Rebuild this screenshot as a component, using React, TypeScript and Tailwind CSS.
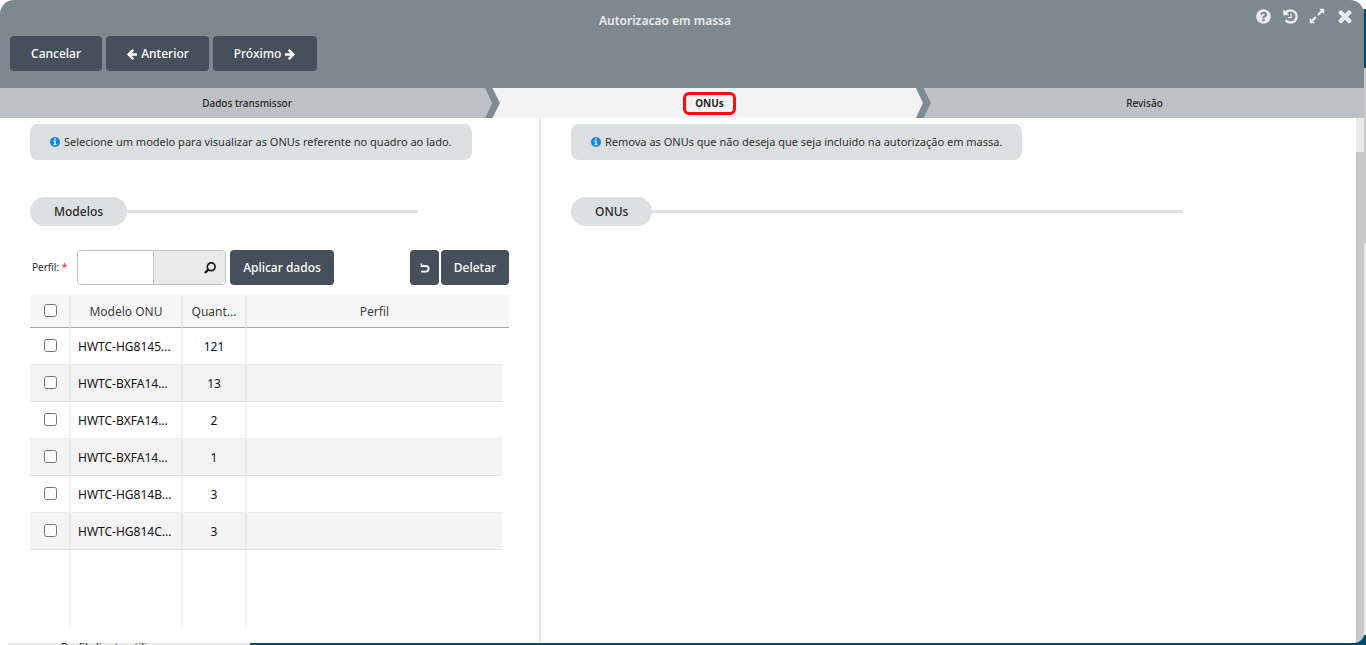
import type { ReactNode } from "react";

const paths = {
  arrowLeft:
    "M1664 896v128q0 53-32.5 90.5t-84.5 37.5h-704l293 294q38 36 38 90t-38 90l-75 76q-37 37-90 37-52 0-91-37l-651-652q-37-37-37-90 0-52 37-91l651-650q38-38 91-38 52 0 90 38l75 74q38 38 38 91t-38 91l-293 293h704q52 0 84.5 37.5t32.5 90.5z",
  arrowRight:
    "M1600 960q0 54-37 91l-651 651q-39 37-91 37-51 0-90-37l-75-75q-38-38-38-91t38-91l293-293h-704q-52 0-84.5-37.5t-32.5-90.5v-128q0-53 32.5-90.5t84.5-37.5h704l-293-294q-38-36-38-90t38-90l75-75q38-38 90-38 53 0 91 38l651 651q37 35 37 90z",
  info: "M1152 1376v-160q0-14-9-23t-23-9h-96v-512q0-14-9-23t-23-9h-320q-14 0-23 9t-9 23v160q0 14 9 23t23 9h96v320h-96q-14 0-23 9t-9 23v160q0 14 9 23t23 9h448q14 0 23-9t9-23zm-128-896v-160q0-14-9-23t-23-9h-192q-14 0-23 9t-9 23v160q0 14 9 23t23 9h192q14 0 23-9t9-23zm640 416q0 209-103 385.5t-279.5 279.5-385.5 103-385.5-103-279.5-279.5-103-385.5 103-385.5 279.5-279.5 385.5-103 385.5 103 279.5 279.5 103 385.5z",
  question:
    "M1024 1376v-192q0-14-9-23t-23-9h-192q-14 0-23 9t-9 23v192q0 14 9 23t23 9h192q14 0 23-9t9-23zm256-672q0-88-55.5-163t-138.5-116-170-41q-243 0-371 213-15 24 8 42l132 100q7 6 19 6 16 0 25-12 53-68 86-92 34-24 86-24 48 0 85.5 26t37.5 59q0 38-20 61t-68 45q-63 28-115.5 86.5t-52.5 125.5v36q0 14 9 23t23 9h192q14 0 23-9t9-23q0-19 21.5-49.5t54.5-49.5q32-18 49-28.5t46-35 44.5-48 28-60.5 12.5-81zm384 192q0 209-103 385.5t-279.5 279.5-385.5 103-385.5-103-279.5-279.5-103-385.5 103-385.5 279.5-279.5 385.5-103 385.5 103 279.5 279.5 103 385.5z",
  history:
    "M1664 896q0 156-61 298t-164 245-245 164-298 61q-172 0-327-72.5t-264-204.5q-7-10-6.5-22.5t8.5-20.5l137-138q10-9 25-9 16 2 23 12 73 95 179 147t225 52q104 0 198.5-40.5t163.5-109.5 109.5-163.5 40.5-198.5-40.5-198.5-109.5-163.5-163.5-109.5-198.5-40.5q-98 0-188 35.5t-160 101.5l137 138q31 30 14 69-17 40-59 40h-448q-26 0-45-19t-19-45v-448q0-42 40-59 39-17 69 14l130 129q107-101 244.5-156.5t284.5-55.5q156 0 298 61t245 164 164 245 61 298zm-640-288v448q0 14-9 23t-23 9h-320q-14 0-23-9t-9-23v-64q0-14 9-23t23-9h224v-352q0-14 9-23t23-9h64q14 0 23 9t9 23z",
  times:
    "M1490 1322q0 40-28 68l-136 136q-28 28-68 28t-68-28l-294-294-294 294q-28 28-68 28t-68-28l-136-136q-28-28-28-68t28-68l294-294-294-294q-28-28-28-68t28-68l136-136q28-28 68-28t68 28l294 294 294-294q28-28 68-28t68 28l136 136q28 28 28 68t-28 68l-294 294 294 294q28 28 28 68z",
};

function Icon({ name, className }: { name: keyof typeof paths; className: string }) {
  return (
    <svg
      viewBox={name === "info" ? "128 128 1536 1536" : "0 0 1792 1792"}
      fill="currentColor"
      aria-hidden="true"
      className={className}
    >
      <path d={paths[name]} />
    </svg>
  );
}

function Expand() {
  return (
    <svg viewBox="0 0 16 16" aria-hidden="true" className="size-4">
      <path d="M10 .8h5.2V6l-1.8-1.8-3.6 3.6-1.6-1.6 3.6-3.6zM6 15.2H.8V10l1.8 1.8 3.6-3.6 1.6 1.6-3.6 3.6z" fill="currentColor" />
    </svg>
  );
}

function Undo() {
  return (
    <svg viewBox="0 0 10 10" aria-hidden="true" className="size-[10px]">
      <path d="M2 3h3.8a2.7 2.7 0 0 1 0 5.6H1.2" fill="none" stroke="currentColor" strokeWidth="1.8" />
      <path d="M.6.4h1.6v1.7h2.3v1.8H.6z" fill="currentColor" />
    </svg>
  );
}

function Search() {
  return (
    <svg viewBox="0 0 12 12" aria-hidden="true" className="size-3">
      <circle cx="7.2" cy="4.8" r="3.9" fill="none" stroke="currentColor" strokeWidth="1.7" />
      <path d="M4.3 7.7.9 11" stroke="currentColor" strokeWidth="2.4" />
    </svg>
  );
}

function Button({ children, className, label }: { children: ReactNode; className: string; label?: string }) {
  return (
    <button
      type="button"
      aria-label={label}
      className={`flex h-[35px] items-center justify-center gap-[3px] rounded bg-[#46505a] text-xs font-medium whitespace-nowrap text-white ${className}`}
    >
      {children}
    </button>
  );
}

function Chevron({ before, after }: { before: string; after: string }) {
  return (
    <svg viewBox="0 0 15 30" aria-hidden="true" className="absolute top-0 -left-[9px] h-[30px] w-[15px]">
      <path d="M0 0h15v30H0z" className={after} />
      <path d="M0 0l7 15-7 15z" className={before} />
      <path d="M0 0h7.5L15 15 7.5 30H0l7-15z" className="fill-[#7e8a94]" />
    </svg>
  );
}

function Notice({ children }: { children: ReactNode }) {
  return (
    <p className="flex h-9 w-fit items-center gap-1 rounded-lg bg-[#dbdfdf] px-5 text-[11px] whitespace-nowrap text-[#2f3133]">
      <Icon name="info" className="size-[10px] text-[#0f83e8]" />
      {children}
    </p>
  );
}

function SectionTitle({ children }: { children: ReactNode }) {
  return (
    <div className="mt-[37px] flex w-[81%] items-center">
      <h2 className="flex h-[29px] items-center rounded-full bg-[#dddfe1] px-6 text-xs font-medium text-[#26282a]">{children}</h2>
      <span className="h-[3px] grow bg-[#dddfe1]" />
    </div>
  );
}

const rows = [
  { model: "HWTC-HG8145...", count: 121 },
  { model: "HWTC-BXFA14...", count: 13 },
  { model: "HWTC-BXFA14...", count: 2 },
  { model: "HWTC-BXFA14...", count: 1 },
  { model: "HWTC-HG814B...", count: 3 },
  { model: "HWTC-HG814C...", count: 3 },
];

const line = "border-r-2 border-r-black/5";
const head = "h-[33px] border-b border-b-[#9fa4a8] bg-[#f7f7f7] font-normal text-[#3c3e40]";
const textPad = "p-0 pt-0.5";
const checkPad = "p-0 pb-0.5 pl-0.5";

function ModelTable() {
  return (
    <table className="mt-2.5 w-full table-fixed border-separate border-spacing-0 text-xs">
      <colgroup>
        <col className="w-[41px]" />
        <col className="w-28" />
        <col className="w-16" />
        <col />
        <col className="w-[7px]" />
      </colgroup>
      <thead>
        <tr>
          <th className={`${head} ${checkPad} ${line}`}>
            <input type="checkbox" aria-label="Selecionar todos" className="mx-auto block size-[13px]" />
          </th>
          <th className={`${head} ${textPad} ${line}`}>Modelo ONU</th>
          <th className={`${head} ${textPad} ${line}`}>Quant...</th>
          <th className={`${head} ${textPad}`}>Perfil</th>
          <td className={`${head} p-0`} />
        </tr>
      </thead>
      <tbody>
        {rows.map((row, i) => {
          const cell = `h-[37px] border-b border-b-black/7 text-center text-[#111] ${i % 2 ? "bg-[#f4f4f4]" : "bg-white"}`;
          return (
            <tr key={i}>
              <td className={`${cell} ${checkPad} ${line}`}>
                <input type="checkbox" aria-label={`Selecionar ${row.model}`} className="mx-auto block size-[13px]" />
              </td>
              <td className={`${cell} ${textPad} ${line}`}>
                <span className="block pl-[7px] text-left whitespace-nowrap">{row.model}</span>
              </td>
              <td className={`${cell} ${textPad} ${line}`}>{row.count}</td>
              <td className={cell} />
            </tr>
          );
        })}
        <tr>
          <td className={`h-[77px] ${line}`} />
          <td className={line} />
          <td className={line} />
          <td />
        </tr>
      </tbody>
    </table>
  );
}

export default function App() {
  return (
    <div className="relative h-screen overflow-hidden bg-white font-['Noto_Sans',sans-serif]">
      <div className="flex h-full flex-col">
        <div className="flex grow flex-col items-end pt-[9px]">
          <div className="h-[59px] w-4 bg-[#004a6b]" />
          <div className="h-[175px] w-4 bg-[#c8c8c8]" />
          <div className="w-4 grow bg-[#e9e9e9]" />
        </div>
        <div className="flex items-end">
          <div className="ml-2 h-0.5 w-[242px] bg-[#e9e9e9] pl-[53px] text-[11px] leading-2 whitespace-nowrap text-[#222]">
            Perfil cliente utili
          </div>
          <div className="h-2.5 grow bg-[#004a6b]" />
        </div>
      </div>

      <section
        aria-label="Autorizacao em massa"
        className="absolute inset-0 mr-0.5 mb-0.5 flex flex-col overflow-hidden rounded-t-[14px] rounded-b-[10px] bg-white"
      >
        <header className="flex h-[88px] shrink-0 flex-col bg-[#7d898e]">
          <div className="flex h-9 items-start">
            <div className="w-[75px]" />
            <h1 className="grow pt-[13px] text-center text-xs leading-4 font-semibold text-[#e9ebec]">Autorizacao em massa</h1>
            <div className="flex w-[109px] items-center gap-2.5 pt-1.5 text-[#e9ebec]">
              <button type="button" aria-label="Ajuda">
                <Icon name="question" className="size-[17px]" />
              </button>
              <button type="button" aria-label="Histórico">
                <Icon name="history" className="size-[17px]" />
              </button>
              <button type="button" aria-label="Expandir">
                <Expand />
              </button>
              <button type="button" aria-label="Fechar">
                <Icon name="times" className="size-5" />
              </button>
            </div>
          </div>
          <div className="flex gap-1 px-2.5">
            <Button className="w-[92px]">Cancelar</Button>
            <Button className="w-[103px]">
              <Icon name="arrowLeft" className="size-3" /> Anterior
            </Button>
            <Button className="w-[104px]">
              Próximo <Icon name="arrowRight" className="size-3" />
            </Button>
          </div>
        </header>

        <ol className="grid h-[30px] shrink-0 grid-cols-[494fr_431fr_439fr] text-[10px] text-[#26282a]">
          <li className="flex items-center justify-center bg-[#bdc1c5] font-medium">Dados transmissor</li>
          <li className="relative flex items-center justify-center bg-[#f3f3f3] font-bold">
            <Chevron before="fill-[#bdc1c5]" after="fill-[#f3f3f3]" />
            <span className="flex h-[23px] w-[53px] items-center justify-center rounded-md border-3 border-[#ff0a12]">ONUs</span>
          </li>
          <li className="relative flex items-center justify-center bg-[#bdc1c5] font-medium">
            <Chevron before="fill-[#f3f3f3]" after="fill-[#bdc1c5]" />
            Revisão
          </li>
        </ol>

        <div className="flex min-h-0 grow">
          <main className="grid min-w-0 flex-1 grid-cols-[541fr_815fr]">
            <div className="border-r-2 border-[#e6e6e6] px-[30px] pt-1.5">
              <Notice>Selecione um modelo para visualizar as ONUs referente no quadro ao lado.</Notice>
              <SectionTitle>Modelos</SectionTitle>
              <div className="mt-6 flex items-center">
                <label htmlFor="perfil" className="w-[47px] pl-0.5 text-[10px] whitespace-nowrap text-[#26282a]">
                  Perfil: <span className="text-[#f02020]">*</span>
                </label>
                <div className="flex h-[35px] w-[149px] overflow-hidden rounded border border-[#bdc1c5]">
                  <input id="perfil" type="text" className="w-[76px] border-r border-[#bdc1c5] bg-white px-2 text-xs outline-none" />
                  <button type="button" aria-label="Buscar perfil" className="flex grow items-center justify-end bg-[#eaeaea] pr-[9px] text-[#1c1c1c]">
                    <Search />
                  </button>
                </div>
                <Button className="ml-1 w-[104px]">Aplicar dados</Button>
                <div className="ml-auto flex gap-0.5">
                  <Button className="w-[29px]" label="Desfazer">
                    <Undo />
                  </Button>
                  <Button className="w-[68px]">Deletar</Button>
                </div>
              </div>
              <ModelTable />
            </div>
            <div className="pt-1.5 pr-[30px] pl-[30px]">
              <Notice>Remova as ONUs que não deseja que seja incluido na autorização em massa.</Notice>
              <SectionTitle>ONUs</SectionTitle>
            </div>
          </main>
          <div className="flex w-2 shrink-0 flex-col">
            <div className="h-[34px] bg-[#e9e9e9]" />
            <div className="grow bg-[#c8c8c8]" />
          </div>
        </div>
      </section>
    </div>
  );
}
